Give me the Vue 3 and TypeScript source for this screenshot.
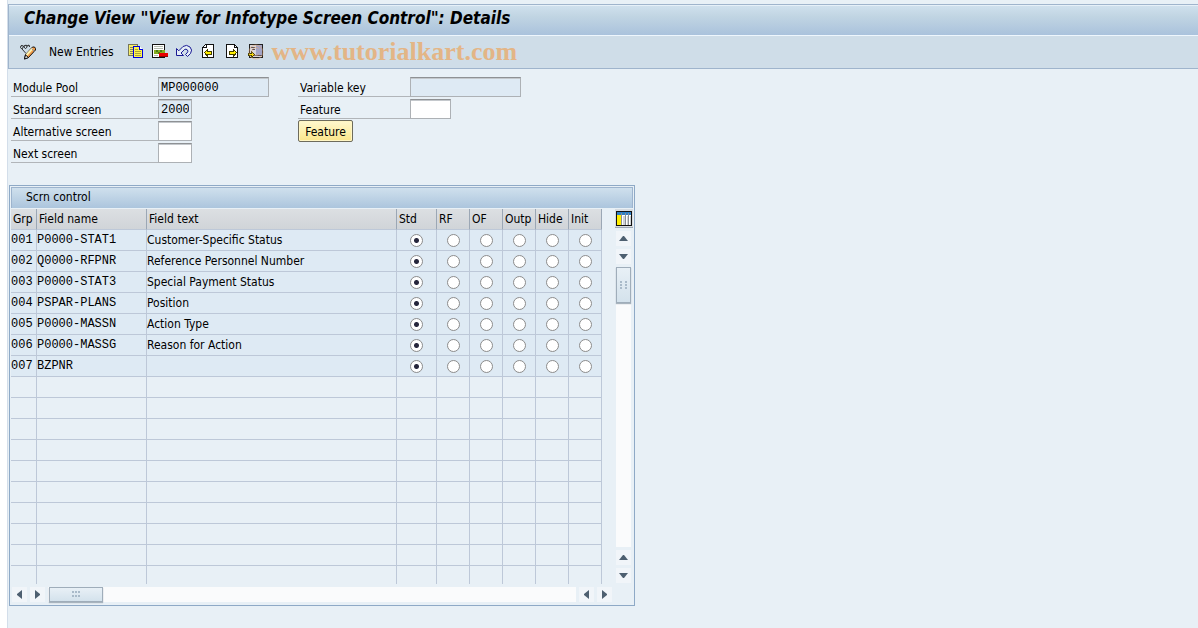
<script setup lang="ts">
import { reactive, ref } from 'vue'

interface Row {
  grp: string
  name: string
  text: string
  state: string
}

const modulePool = ref('MP000000')
const standardScreen = ref('2000')
const alternativeScreen = ref('')
const nextScreen = ref('')
const variableKey = ref('')
const feature = ref('')

const options: string[] = ['Std', 'RF', 'OF', 'Outp', 'Hide', 'Init']

const rows = reactive<Row[]>([
  { grp: '001', name: 'P0000-STAT1', text: 'Customer-Specific Status', state: 'Std' },
  { grp: '002', name: 'Q0000-RFPNR', text: 'Reference Personnel Number', state: 'Std' },
  { grp: '003', name: 'P0000-STAT3', text: 'Special Payment Status', state: 'Std' },
  { grp: '004', name: 'PSPAR-PLANS', text: 'Position', state: 'Std' },
  { grp: '005', name: 'P0000-MASSN', text: 'Action Type', state: 'Std' },
  { grp: '006', name: 'P0000-MASSG', text: 'Reason for Action', state: 'Std' },
  { grp: '007', name: 'BZPNR', text: '', state: 'Std' },
])
const emptyRows = 10
</script>

<template>
  <div class="window">
    <header class="head">
      <h1 class="title">Change View "View for Infotype Screen Control": Details</h1>
      <div class="toolbar">
        <button class="tool" type="button" aria-label="Display or change">
          <svg width="16" height="16" viewBox="0 0 16 16">
            <path d="M.5 3.500 Q.5 1 2.500 1.500 Q4 2.500 2.500 4.500 Q1 5 .5 3.500 M3 2.500 L5 1.500 Q6.500 .5 7 2 Q7 4 5.500 4.500 Q4 4 4.500 2.500 M7 2 L9 1 L9.500 3" fill="none" stroke="#222" />
            <path d="M2 5 L6 9.500" stroke="#333" fill="none" />
            <path d="M5.500 10.500 L12.500 3 L14.500 3 L15.500 4.500 L15.500 6 L8.500 13.500 L4.500 15 Z" fill="#f09a48" stroke="#111" />
            <path d="M6.500 11 L12.500 4.500" stroke="#fff3b0" stroke-width="2" />
            <path d="M11.500 4.500 L14.500 7.500" stroke="#8495ab" />
            <path d="M4.500 15 L5.500 11 L8.500 13.500 Z" fill="#fff" stroke="#111" />
          </svg>
        </button>
        <button class="tool tool-text" type="button">New Entries</button>
        <button class="tool" type="button" aria-label="Copy as">
          <svg width="16" height="16" viewBox="0 0 16 16" shape-rendering="crispEdges">
            <path d="M.5 .5h9v11h-9z" fill="#f6ed6a" stroke="#77775a" />
            <path d="M2 3.500h3M2 5.500h3M2 7.500h3M2 9.500h3" stroke="#88885a" />
            <path d="M5.500 2.500h6l3 3v8h-9z" fill="#fff44d" stroke="#0000dc" />
            <path d="M11.500 2.500v3h3" fill="#fff" stroke="#0000dc" />
            <path d="M7 5.500h3M7 7.500h6M7 9.500h6M7 11.500h6" stroke="#aaa43c" />
          </svg>
        </button>
        <button class="tool" type="button" aria-label="Delete">
          <svg width="16" height="16" viewBox="0 0 16 16" shape-rendering="crispEdges">
            <path d="M.5 .5h12v13h-12z" fill="#fff" stroke="#111" />
            <path d="M2 2.500h9M2 4.500h9" stroke="#b4bcae" />
            <path d="M2 6h11v4H2z" fill="#86ad21" />
            <path d="M4 6h2v2h2v2H6V8H4zM8 6h2v2H8z" fill="#4c7d13" />
            <path d="M2 11.500h4" stroke="#b4bcae" />
            <path d="M7 9h9v3H7z" fill="#e80000" />
            <path d="M7 12h9v1H7z" fill="#900000" />
          </svg>
        </button>
        <button class="tool" type="button" aria-label="Undo change">
          <svg width="16" height="16" viewBox="0 0 16 16">
            <path d="M.5 4.500V11.500H7.500L5 9L8.500 5.500Q10 4.500 11.500 6Q12.500 7.500 11 9L9.500 10.500L11.500 12.500L14.500 9.500Q17 6 14 3Q10.500 0 7 2.500L2.800 6.800Z" fill="#e4edf6" stroke="#1a1a94" />
          </svg>
        </button>
        <button class="tool" type="button" aria-label="Previous entry">
          <svg width="16" height="16" viewBox="0 0 16 16" shape-rendering="crispEdges">
            <path d="M2.500 3.500l3-3h8v13h-11z" fill="#fff" stroke="#111" />
            <path d="M3 3.500h3v-3" fill="none" stroke="#111" />
            <path d="M4.500 8.500l3-3v2h4v3h-4v2z" fill="#ffee00" stroke="#443f00" />
          </svg>
        </button>
        <button class="tool" type="button" aria-label="Next entry">
          <svg width="16" height="16" viewBox="0 0 16 16" shape-rendering="crispEdges">
            <path d="M2.500 .5h8l3 3v10h-11z" fill="#fff" stroke="#111" />
            <path d="M10.500 .5v3h3" fill="none" stroke="#111" />
            <path d="M12.500 8.500l-3-3v2h-4v3h4v2z" fill="#ffee00" stroke="#443f00" />
          </svg>
        </button>
        <button class="tool" type="button" aria-label="Other entry">
          <svg width="18" height="16" viewBox="0 0 18 16">
            <g shape-rendering="crispEdges">
              <path d="M1.500 .5h13v13h-13z" fill="#d9d6da" stroke="#222" />
              <path d="M8 1h6v10H8z" fill="#a3a4c6" />
              <path d="M3 3.500h4M4 5.500h3M6 11.500h8" stroke="#5a5158" />
              <path d="M.5 9.500h3v-2l3 3-3 3v-2h-3z" fill="#ffe600" stroke="#443f00" />
            </g>
            <circle cx="8" cy="8" r="7" fill="none" stroke="#e8a468" stroke-opacity=".5" />
            <path d="M11 5a4 4 0 1 0 0 5" fill="none" stroke="#e8a468" stroke-opacity=".5" />
          </svg>
        </button>
        <span class="watermark">www.tutorialkart.com</span>
      </div>
    </header>

    <main class="body">
      <form class="form" @submit.prevent>
        <div class="group">
          <div class="field"><label for="pool">Module Pool</label><input id="pool" v-model="modulePool" class="wide locked" type="text" readonly /></div>
          <div class="field"><label for="std">Standard screen</label><input id="std" v-model="standardScreen" class="locked" type="text" readonly /></div>
          <div class="field"><label for="alt">Alternative screen</label><input id="alt" v-model="alternativeScreen" type="text" /></div>
          <div class="field"><label for="next">Next screen</label><input id="next" v-model="nextScreen" type="text" /></div>
        </div>
        <div class="group second">
          <div class="field"><label for="key">Variable key</label><input id="key" v-model="variableKey" class="wide locked" type="text" readonly /></div>
          <div class="field"><label for="feat">Feature</label><input id="feat" v-model="feature" class="mid" type="text" /></div>
          <button class="push" type="button">Feature</button>
        </div>
      </form>

      <section class="panel">
        <h2 class="caption">Scrn control</h2>
        <div class="content">
          <table class="grid">
            <colgroup>
              <col class="c-grp" /><col class="c-name" /><col class="c-text" /><col class="c-std" />
              <col v-for="n in 5" :key="n" class="c-opt" />
            </colgroup>
            <thead>
              <tr>
                <th scope="col">Grp</th>
                <th scope="col">Field name</th>
                <th scope="col">Field text</th>
                <th v-for="o in options" :key="o" scope="col">{{ o }}</th>
              </tr>
            </thead>
            <tbody>
              <tr v-for="row in rows" :key="row.grp" class="filled">
                <td class="mono">{{ row.grp }}</td>
                <td class="mono">{{ row.name }}</td>
                <td>{{ row.text }}</td>
                <td v-for="o in options" :key="o" class="choice">
                  <input v-model="row.state" type="radio" :name="'state-' + row.grp" :value="o" :aria-label="row.name + ' ' + o" />
                </td>
              </tr>
              <tr v-for="n in emptyRows" :key="'e' + n">
                <td v-for="c in 9" :key="c"></td>
              </tr>
            </tbody>
          </table>
          <div class="side">
            <button class="config" type="button" aria-label="Table settings">
              <svg width="16" height="15" viewBox="0 0 16 15" shape-rendering="crispEdges">
                <path d="M.5 .5h15v14H.5z" fill="#fff" stroke="#111" />
                <path d="M1 1h14v3H1z" fill="#2f7fc4" />
                <path d="M1 4h4v10H1z" fill="#ffee00" />
                <path d="M5.500 2v12M9.500 2v12M12.500 2v12" stroke="#8a8f94" />
                <path d="M7 5h2v9H7zM11 5h1v9h-1zM14 5h1v9h-1z" fill="#cfd3d6" />
                <path d="M.5 .5h15v14H.5z" fill="none" stroke="#111" />
              </svg>
            </button>
            <button class="arrow" type="button" aria-label="First row"><svg width="9" height="5"><path d="M0 5L4 0h1l4 5z" /></svg></button>
            <button class="arrow" type="button" aria-label="Row up"><svg width="9" height="5"><path d="M0 0h9L5 5H4z" /></svg></button>
            <div class="track vertical">
              <div class="thumb"><svg width="7" height="8"><path d="M0 0h2v2H0zM5 0h2v2H5zM0 3h2v2H0zM5 3h2v2H5zM0 6h2v2H0zM5 6h2v2H5z" /></svg></div>
            </div>
            <button class="arrow" type="button" aria-label="Row down"><svg width="9" height="5"><path d="M0 5L4 0h1l4 5z" /></svg></button>
            <button class="arrow" type="button" aria-label="Last row"><svg width="9" height="5"><path d="M0 0h9L5 5H4z" /></svg></button>
          </div>
        </div>
        <div class="bottom">
          <button class="arrow" type="button" aria-label="First column"><svg width="5" height="9"><path d="M5 0v9L0 5V4z" /></svg></button>
          <button class="arrow" type="button" aria-label="Column left"><svg width="5" height="9"><path d="M0 0v9l5-4V4z" /></svg></button>
          <div class="track horizontal">
            <div class="thumb"><svg width="8" height="7"><path d="M0 0h2v2H0zM3 0h2v2H3zM6 0h2v2H6zM0 4h2v2H0zM3 4h2v2H3zM6 4h2v2H6z" /></svg></div>
          </div>
          <button class="arrow" type="button" aria-label="Column right"><svg width="5" height="9"><path d="M5 0v9L0 5V4z" /></svg></button>
          <button class="arrow" type="button" aria-label="Last column"><svg width="5" height="9"><path d="M0 0v9l5-4V4z" /></svg></button>
        </div>
      </section>
    </main>
  </div>
</template>

<style>
body {
  background: #fff;
}
</style>

<style scoped>
.window {
  box-sizing: border-box;
  min-height: 100vh;
  margin-left: 7px;
  padding-top: 4px;
  border-left: 1px solid #d3deea;
  background: #e8f0f6;
  color: #000;
  font: 12px/16px "DejaVu Sans Condensed", "Noto Sans", sans-serif;
}
button {
  font: inherit;
  color: inherit;
  padding: 0;
  border: 0;
  background: none;
}
svg {
  display: block;
}
.head {
  border: 1px solid #9fb4cc;
  border-right: 0;
}
.title {
  margin: 0;
  height: 30px;
  box-sizing: border-box;
  padding: 0 15px;
  border-top: 1px solid #e6f0f8;
  background: linear-gradient(#cfe0ed, #c1d5e3 35%, #aac2dc);
  font: italic bold 17px/24px "DejaVu Sans Condensed", "Noto Sans", sans-serif;
  white-space: nowrap;
}
.toolbar {
  display: flex;
  align-items: center;
  gap: 8px;
  height: 32px;
  padding-left: 11px;
  border-top: 1px solid #eef6fd;
  background: #cfdde8;
}
.tool-text {
  margin: 0 6px 0 5px;
  white-space: nowrap;
}
.watermark {
  margin-left: -2px;
  color: #e3b586;
  font: bold 26px/30px "Liberation Serif", serif;
}
.body {
  padding: 8px 1px 22px;
}
.form {
  display: flex;
  gap: 29px;
  padding-left: 2px;
}
.group {
  display: flex;
  flex-direction: column;
  align-items: flex-start;
  gap: 2px;
}
.field {
  display: flex;
  height: 20px;
}
.field label {
  box-sizing: border-box;
  width: 147px;
  padding: 3px 2px 0;
  border-bottom: 1px solid #b1b5b9;
}
.second label {
  width: 112px;
}
.field input {
  box-sizing: border-box;
  width: 34px;
  height: 20px;
  margin: 0;
  padding: 1px 2px 0;
  border: 1px solid #adb1b5;
  border-top-color: #8e9194;
  border-radius: 0;
  outline: 0;
  background: #fff;
  box-shadow: inset 0 1px 0 #c4c8cc;
  color: #000;
  font: 12px/16px "Liberation Mono", monospace;
}
.field input.wide {
  width: 111px;
}
.field input.mid {
  width: 41px;
}
.field input.locked {
  background: #deeaf4;
}
.second {
  align-self: flex-start;
}
.push {
  height: 22px;
  width: 55px;
  margin-top: -1px;
  padding-top: 1px;
  border: 1px solid #6d6b5c;
  border-radius: 2px;
  background: linear-gradient(#fff8cf, #fdeea6 60%, #fbe48a);
  box-shadow: inset 0 0 0 1px #fff6c4;
}
.panel {
  box-sizing: border-box;
  max-width: 626px;
  margin-top: 22px;
  padding: 1px;
  border: 1px solid #8ea9c6;
}
.caption {
  margin: 0;
  height: 21px;
  padding-left: 14px;
  border: 1px solid #9db4ce;
  border-bottom: 0;
  box-sizing: border-box;
  background: linear-gradient(#cfe0ed, #acc5dd);
  font: 12px/18px "DejaVu Sans Condensed", "Noto Sans", sans-serif;
}
.content {
  display: flex;
  justify-content: space-between;
  padding: 1px 1px 0 0;
}
.grid {
  flex: 1;
  max-width: 591px;
  table-layout: fixed;
  border-collapse: separate;
  border-spacing: 0;
}
.c-grp { width: 26px; }
.c-name { width: 110px; }
.c-text { width: 250px; }
.c-std { width: 40px; }
.c-opt { width: 33px; }
th,
td {
  box-sizing: border-box;
  height: 21px;
  padding: 0;
  border-right: 1px solid #bdc8d8;
  border-bottom: 1px solid #bdc8d8;
  text-align: left;
  white-space: nowrap;
  line-height: 20px;
}
th {
  padding-left: 2px;
  border-right-color: #9ba7b5;
  background: linear-gradient(#dcdfe2, #d0d4d8);
  font-weight: normal;
}
tbody tr:last-child td {
  height: 18px;
  border-bottom: 0;
}
.filled {
  background: #deeaf4;
}
.mono {
  font-family: "Liberation Mono", monospace;
}
.choice {
  text-align: center;
}
.choice input {
  appearance: none;
  display: block;
  box-sizing: border-box;
  width: 13px;
  height: 13px;
  margin: 0 auto;
  border: 1px solid #8c8c8c;
  border-radius: 50%;
  background: #fff;
}
.choice input:checked {
  background: radial-gradient(circle, #26263c 2px, #fff 3px);
}
.side {
  display: flex;
  flex-direction: column;
  align-items: center;
  gap: 3px;
  width: 17px;
  padding-bottom: 1px;
}
.config {
  display: flex;
  justify-content: center;
  width: 18px;
  height: 19px;
  padding-top: 2px;
  border-bottom: 1px solid #9ba7b5;
  background: #d6dbe0;
  box-sizing: border-box;
}
.arrow {
  display: flex;
  flex: none;
  align-items: center;
  justify-content: center;
  width: 15px;
  height: 15px;
  background: #f1f5f9;
}
.arrow svg {
  fill: #4d5f70;
}
.track {
  background: #fafbfc;
}
.vertical {
  flex: 1;
  width: 15px;
}
.thumb {
  display: flex;
  align-items: center;
  justify-content: center;
  box-sizing: border-box;
  border: 1px solid #9fadba;
  background: linear-gradient(#e8f0f6, #d4e2ec);
  box-shadow: 0 1px 1px #a8b4be;
}
.thumb svg {
  fill: #a9bac9;
}
.vertical .thumb {
  height: 36px;
}
.bottom {
  display: flex;
  gap: 3px;
  padding: 3px 21px 2px 1px;
}
.horizontal {
  flex: 1;
  height: 15px;
}
.horizontal .thumb {
  width: 54px;
  height: 15px;
  margin-left: 1px;
}
</style>
